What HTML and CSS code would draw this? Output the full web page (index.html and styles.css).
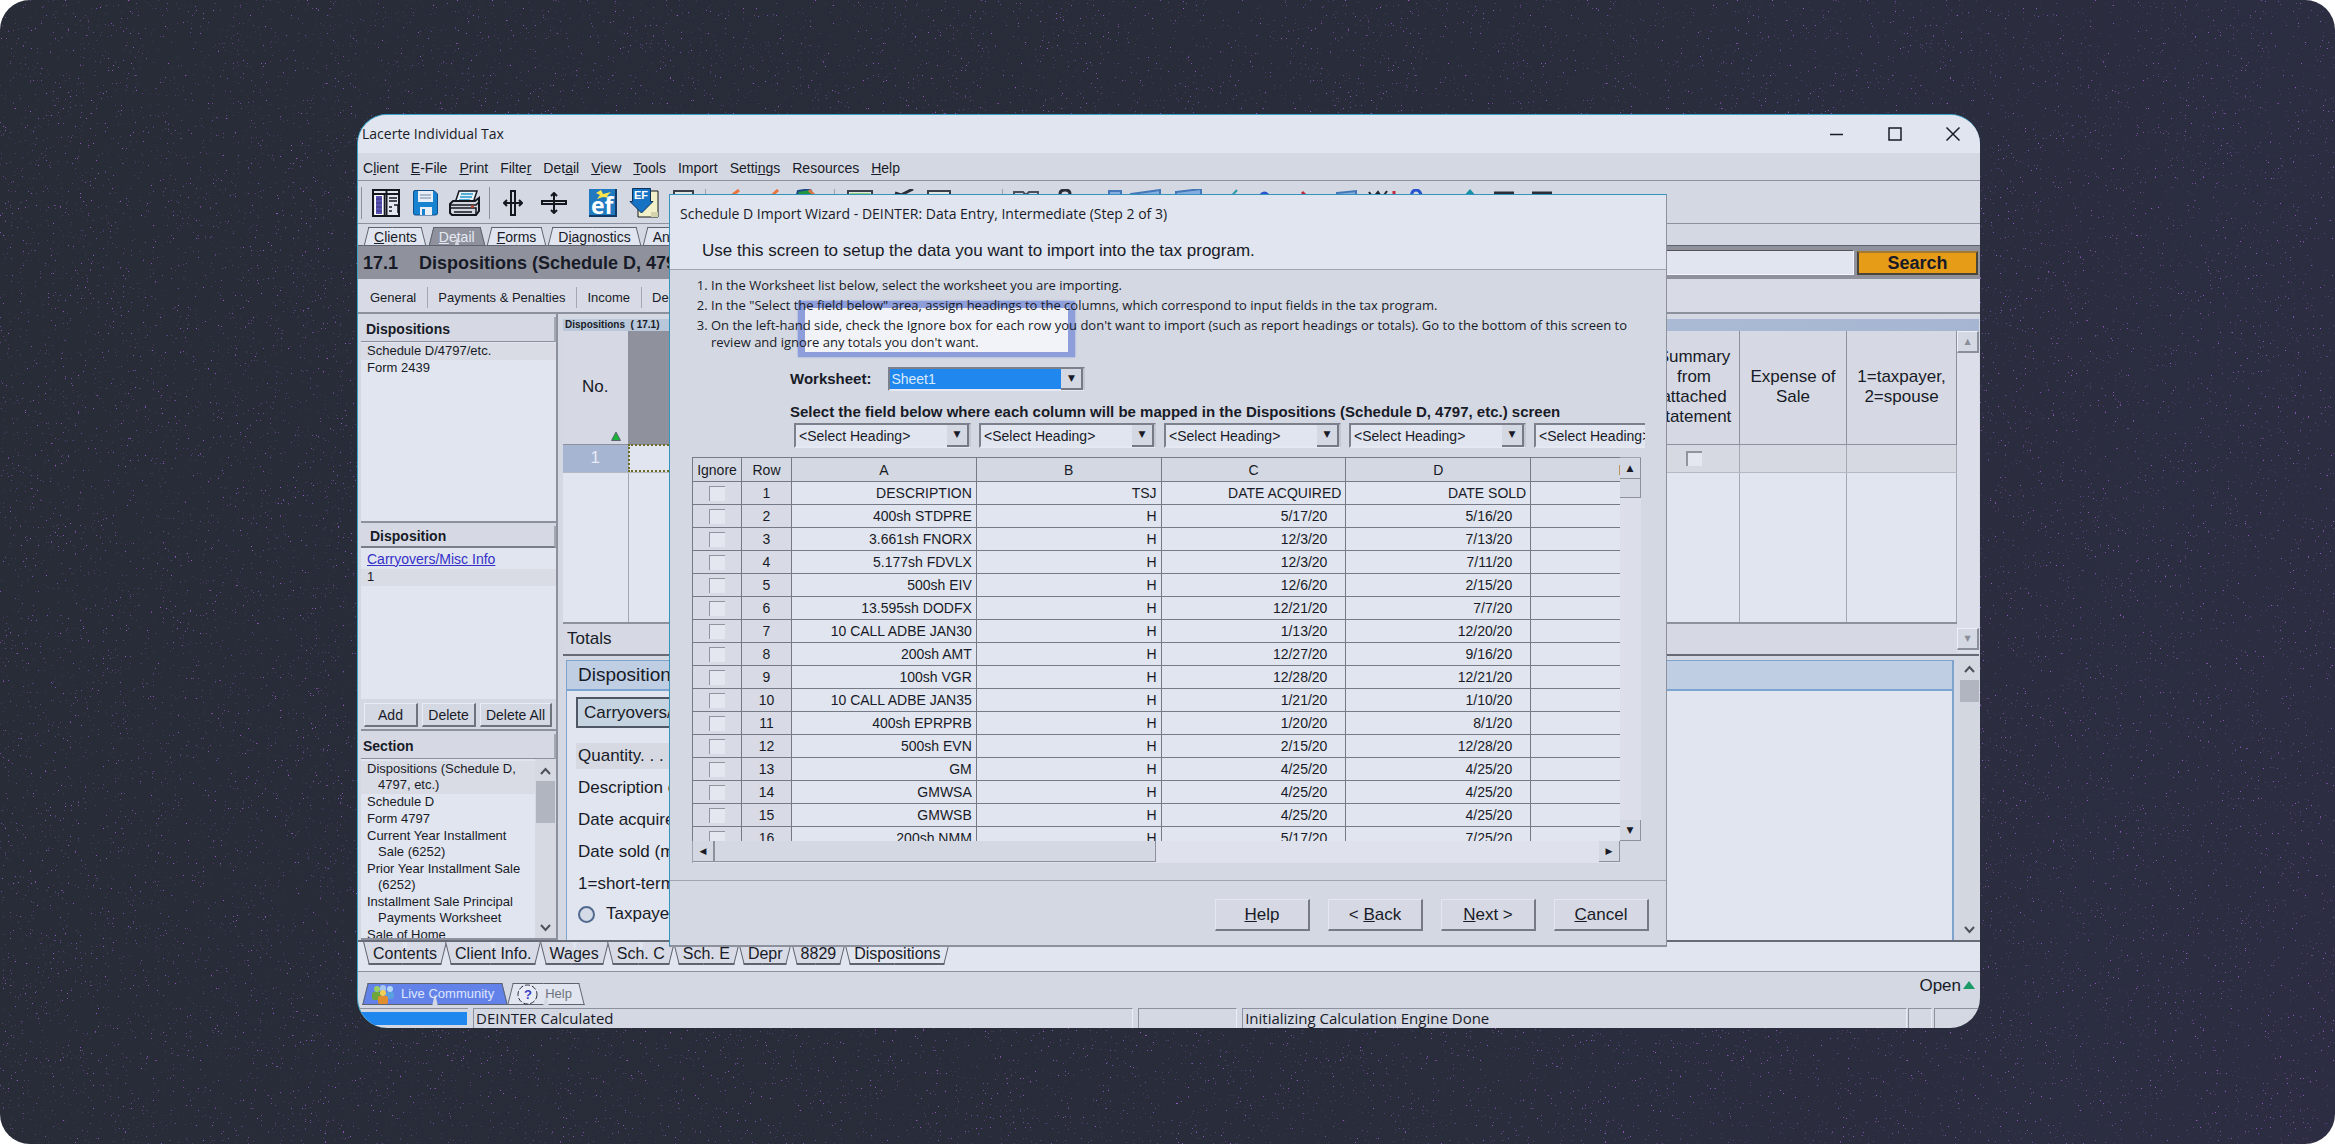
FILE: index.html
```html
<!DOCTYPE html>
<html lang="en">
<head>
<meta charset="utf-8">
<title>Lacerte Individual Tax</title>
<link rel="stylesheet" href="styles.css">
</head>
<body>
<div class="stage">
<svg class="grain" aria-hidden="true"><filter id="grain"><feTurbulence type="fractalNoise" baseFrequency="0.6" numOctaves="2" seed="4"/><feColorMatrix values="0 0 0 0 0.29  0 0 0 0 0.1  0 0 0 0 0.54  9 0 0 0 -6.5"/></filter><rect width="100%" height="100%" filter="url(#grain)"/></svg>
<div class="window">
  <header class="titlebar">
    <span class="app-title">Lacerte Individual Tax</span>
    <div class="controls">
      <button aria-label="Minimize"><svg width="14" height="14" viewBox="0 0 14 14"><path d="M0 7.500h13"/></svg></button>
      <button aria-label="Maximize"><svg width="14" height="14" viewBox="0 0 14 14"><path d="M1 1h12v12H1z"/></svg></button>
      <button aria-label="Close"><svg width="14" height="14" viewBox="0 0 14 14"><path d="M.5.5l13 13M13.500.5l-13 13"/></svg></button>
    </div>
  </header>
  <nav class="menubar">
    <button>C<u>l</u>ient</button><button><u>E</u>-File</button><button><u>P</u>rint</button><button>Filte<u>r</u></button><button>Det<u>a</u>il</button><button><u>V</u>iew</button><button><u>T</u>ools</button><button>Import</button><button>Setti<u>n</u>gs</button><button>Resources</button><button><u>H</u>elp</button>
  </nav>
  <div class="toolbar">
    <button class="t-layout" aria-label="Client list"><svg width="28" height="28" viewBox="0 0 28 28"><path fill="#e4e7f0" stroke="#15171f" stroke-width="2" d="M1 1h26v26H1z"/><path stroke="#15171f" stroke-width="2" d="M1 5h26M14.500 1v26"/><path fill="#5a55b5" stroke="#fff" d="M3.500 6.500h7v19h-7z"/><path stroke="#3a3780" d="M4 10h6M4 14h6M4 18h6M4 22h6"/><path stroke="#15171f" stroke-width="1.500" d="M12.500 5v22M17 9h8M17 12h8M17 18h3M17 22h3M22 16h4v8"/></svg></button>
    <button class="t-save" aria-label="Save"><svg width="25" height="26" viewBox="0 0 25 26"><path fill="#1782d0" stroke="#0c4f8c" d="M.5 2q0-1.500 1.500-1.500h19l3.500 3.500v19q0 2-2 2H2q-1.500 0-1.500-2z"/><path fill="#e9edf5" d="M5 1h15v11H5zM7 17h12v8H7z"/><path fill="#1782d0" d="M9 19h3v6H9z"/><path stroke="#6f87a8" d="M7 5h11M7 8h11"/></svg></button>
    <button class="t-print" aria-label="Print"><svg width="31" height="27" viewBox="0 0 31 27"><path fill="#eaf2f8" stroke="#15171f" stroke-width="1.500" d="M10 1h18l-4 12H6z"/><path stroke="#2397c7" stroke-width="1.500" d="M12 4h12M11 7h12M10 10h11"/><path fill="#d3d6dd" stroke="#15171f" stroke-width="2" d="M1 14l3-3h22l4-3v13l-3 4H3l-2-2z"/><path stroke="#15171f" stroke-width="1.500" d="M1 18h26v7M1 15h26l3-3M5 22h18"/><path stroke="#d04a2a" stroke-width="2" d="M22 16.500h3"/></svg></button>
    <i class="sep"></i>
    <button class="t-vsplit" aria-label="Split vertically"><svg width="20" height="28" viewBox="0 0 20 28"><path stroke="#15171f" stroke-width="2" d="M8 2v24h4V2zM1 14h18M4 11l-3 3 3 3M16 11l3 3-3 3"/></svg></button>
    <button class="t-hsplit" aria-label="Split horizontally"><svg width="26" height="22" viewBox="0 0 26 22"><path stroke="#15171f" stroke-width="2" d="M1 9h24v3H1zM13 1v20M10 4l3-3 3 3M10 18l3 3 3-3"/></svg></button>
    <button class="t-ef" aria-label="E-file"><svg width="28" height="28" viewBox="0 0 28 28"><path fill="#2179bf" d="M0 0h28v28H0z"/><path stroke="#123a66" stroke-width="2" d="M27 0v27H0"/><path fill="#ffe64d" d="M12 1l2 4 8-2-4 4 3 2-7-1-6 2 3-4-4-2z"/><text x="2" y="25" class="ef-big">ef</text></svg></button>
    <button class="t-efdown" aria-label="Receive e-file"><svg width="30" height="30" viewBox="0 0 30 30"><path fill="#f1f0c8" stroke="#15171f" d="M9 3h20v26H9z"/><path fill="#d3d3ac" d="M22 24h7v5h-7z"/><path fill="#1673c4" stroke="#0b315c" d="M3.500.5h18v13H24L12.500 25 1 13.500h2.500z"/><text x="5" y="11" class="ef-small">EF</text></svg></button>
    <svg class="t-rest" width="892" height="28" viewBox="0 0 892 28" aria-hidden="true">
      <path fill="#dfe8e4" stroke="#3b3f48" stroke-width="2" d="M5 2h19v22H5zM179 2h24v22h-24zM259 2h22v22h-22z"/>
      <path fill="#8cd07c" d="M181 4h20v5h-20z"/>
      <path stroke="#e8753c" stroke-width="3" d="M70 1L56 12M109 1L97 12"/>
      <path fill="#239440" stroke="#1b4b86" stroke-width="2" d="M129 2l12-2 5 12h-20z"/><path stroke="#d97843" stroke-width="3" d="M140 1l8 8"/>
      <path stroke="#2b2e39" stroke-width="3" d="M244 0l-12 6-6-2M391 10V5q0-4 5-4t5 4v5M825 4h20M863 4h20"/>
      <path stroke="#4a4f5c" stroke-width="2" d="M345 12V3h9l3 3 3-3h9v9"/>
      <path stroke="#9da2ad" d="M36.500 0v28M165.500 0v28M333.500 0v28"/>
      <path fill="#84aee0" stroke="#4478b8" stroke-width="2" d="M440 2h12v8h-12zM462 5l29-4v12h-29zM507 3l25-3v12h-25zM668 4l19-2v9h-19z"/>
      <path stroke="#2b9ba8" stroke-width="2" d="M568 1l-9 10"/><path stroke="#2855cf" stroke-width="3" d="M592 6q3-4 7 0M742 10q0-9 5-9t6 9"/>
      <path stroke="#c12a3c" stroke-width="3" d="M633 3l4 4M725 2v8"/><path stroke="#22262f" stroke-width="2" d="M700 3l4 6 5-6 4 6 5-7"/><path fill="#1592a6" d="M801 0l7 8h-14z"/>
    </svg>
  </div>
  <nav class="tabs top-tabs">
    <button class="tab"><span><u>C</u>lients</span></button><button class="tab active"><span><u>D</u>etail</span></button><button class="tab"><span><u>F</u>orms</span></button><button class="tab"><span>D<u>i</u>agnostics</span></button><button class="tab"><span>Ana<u>l</u>ysis</span></button>
  </nav>
  <div class="screen-head">
    <h1><span>17.1</span>Dispositions (Schedule D, 4797, etc.)</h1>
    <input type="text" class="search-box" aria-label="Search">
    <button class="search-btn">Search</button>
  </div>
  <nav class="subnav"><button>General</button><button>Payments &amp; Penalties</button><button>Income</button><button>Deductions</button></nav>

  <main class="main">
    <aside class="side">
      <section class="panel">
        <h2>Dispositions</h2>
        <ul><li class="on">Schedule D/4797/etc.</li><li>Form 2439</li></ul>
      </section>
      <section class="panel second">
        <h2>Disposition</h2>
        <ul><li><a href="#">Carryovers/Misc Info</a></li><li class="on">1</li></ul>
        <div class="panel-btns"><button>Add</button><button>Delete</button><button>Delete All</button></div>
      </section>
      <section class="panel third">
        <h2>Section</h2>
        <div class="scroll-area">
          <ul class="tree"><li class="on">Dispositions (Schedule D, 4797, etc.)</li><li>Schedule D</li><li>Form 4797</li><li>Current Year Installment Sale (6252)</li><li>Prior Year Installment Sale (6252)</li><li>Installment Sale Principal Payments Worksheet</li><li>Sale of Home</li></ul>
          <div class="bar"><svg width="11" height="8" viewBox="0 0 11 8"><path d="M1 7l4.500-5L10 7"/></svg><i></i><svg width="11" height="8" viewBox="0 0 11 8"><path d="M1 1l4.500 5L10 1"/></svg></div>
        </div>
      </section>
    </aside>
    <div class="content">
      <section class="grid-panel">
        <h3>Dispositions &nbsp;( 17.1)</h3>
        <div class="grid-wrap">
          <table class="grid">
            <thead><tr><th class="no">No.<svg width="12" height="10" viewBox="0 0 12 10"><path fill="#19b33a" stroke="#5b6470" d="M6 1l4.500 8.500h-9z"/></svg></th><th class="gray"></th><th class="sum">Summary from attached statement</th><th class="exp">Expense of Sale</th><th class="tax">1=taxpayer, 2=spouse</th></tr></thead>
            <tbody><tr class="first"><td class="num">1</td><td class="cursor"></td><td><input type="checkbox" aria-label="Summary from attached statement"></td><td></td><td></td></tr><tr class="blank"><td></td><td></td><td></td><td></td><td></td></tr></tbody>
            <tfoot><tr><td colspan="5">Totals</td></tr></tfoot>
          </table>
          <div class="old-bar"><button aria-label="Scroll up">▲</button><button aria-label="Scroll down">▼</button></div>
        </div>
      </section>
      <section class="form-panel">
        <div class="form">
          <h2>Disposition Information</h2>
          <button class="carry">Carryovers/Misc Info</button>
          <p class="row on">Quantity. . . . . . . . .</p><p class="row">Description of property</p><p class="row">Date acquired (m/d/y)</p><p class="row">Date sold (m/d/y)</p><p class="row">1=short-term, 2=long-term</p>
          <label class="row radio"><input type="radio" name="owner">Taxpayer</label>
        </div>
        <div class="bar"><svg width="11" height="8" viewBox="0 0 11 8"><path d="M1 7l4.500-5L10 7"/></svg><i></i><svg width="11" height="8" viewBox="0 0 11 8"><path d="M1 1l4.500 5L10 1"/></svg></div>
      </section>
    </div>
  </main>

  <nav class="tabs sheet-tabs">
    <button class="tab"><span>Contents</span></button><button class="tab"><span>Client Info.</span></button><button class="tab"><span>Wages</span></button><button class="tab"><span>Sch. C</span></button><button class="tab"><span>Sch. E</span></button><button class="tab"><span>Depr</span></button><button class="tab"><span>8829</span></button><button class="tab current"><span>Dispositions</span></button>
  </nav>
  <div class="community">
    <div class="tabs live-tabs">
      <button class="tab live"><span><svg width="22" height="20" viewBox="0 0 22 20"><rect x="8" y="1" width="6" height="7" rx="3" fill="#a9c7ef"/><rect x="15" y="2" width="6" height="6" rx="3" fill="#b7d8f5"/><rect x="14" y="8" width="8" height="7" rx="2" fill="#5aa0e0"/><rect x="2" y="2" width="6" height="6" rx="3" fill="#9bcf63"/><rect x="0" y="8" width="9" height="8" rx="2" fill="#6fa63c"/><rect x="8" y="6" width="6" height="6" rx="3" fill="#f3cf55"/><rect x="6" y="12" width="10" height="8" rx="2" fill="#e08f2c"/></svg>Live Community</span></button><button class="tab help"><span><svg width="21" height="21" viewBox="0 0 21 21"><circle cx="10.500" cy="10.500" r="9.500" fill="#e9ecf6" stroke="#272b38" stroke-dasharray="5 2"/><text x="7" y="15" class="qmark">?</text></svg>Help</span></button>
    </div>
    <button class="open">Open<svg width="12" height="9" viewBox="0 0 12 9"><path fill="#1c9a68" d="M6 0l6 8H0z"/></svg></button>
  </div>
  <footer class="status"><div class="progress"><i></i></div><div class="c1">DEINTER Calculated</div><div class="c2"></div><div class="c3">Initializing Calculation Engine Done</div><div class="c4"></div><div class="c5"></div></footer>

  <div class="dialog" role="dialog" aria-labelledby="dlg-title">
    <div class="dlg-head"><h2 id="dlg-title">Schedule D Import Wizard - DEINTER: Data Entry, Intermediate (Step 2 of 3)</h2><p>Use this screen to setup the data you want to import into the tax program.</p></div>
    <div class="dlg-body">
      <div class="callout"></div>
      <ol><li>In the Worksheet list below, select the worksheet you are importing.</li><li>In the "Select the field below" area, assign headings to the columns, which correspond to input fields in the tax program.</li><li>On the left-hand side, check the Ignore box for each row you don't want to import (such as report headings or totals). Go to the bottom of this screen to<br>review and ignore any totals you don't want.</li></ol>
      <div class="sheet-row"><label for="ws">Worksheet:</label><span class="combo ws"><select id="ws"><option>Sheet1</option></select></span></div>
      <h3>Select the field below where each column will be mapped in the Dispositions (Schedule D, 4797, etc.) screen</h3>
      <div class="headings">
        <span class="combo"><select aria-label="Column A"><option>&lt;Select Heading&gt;</option></select></span><span class="combo"><select aria-label="Column B"><option>&lt;Select Heading&gt;</option></select></span><span class="combo"><select aria-label="Column C"><option>&lt;Select Heading&gt;</option></select></span><span class="combo"><select aria-label="Column D"><option>&lt;Select Heading&gt;</option></select></span><span class="combo"><select aria-label="Column E"><option>&lt;Select Heading&gt;</option></select></span>
      </div>
      <div class="sheet">
        <div class="sheet-view">
          <table>
            <thead><tr><th class="ig">Ignore</th><th class="rw">Row</th><th>A</th><th>B</th><th>C</th><th>D</th><th>E</th></tr></thead>
            <tbody>
            <tr class="names"><td><input type="checkbox" aria-label="Ignore row 1"></td><td>1</td><td>DESCRIPTION</td><td>TSJ</td><td>DATE ACQUIRED</td><td>DATE SOLD</td><td></td></tr>
            <tr><td><input type="checkbox" aria-label="Ignore row 2"></td><td>2</td><td>400sh STDPRE</td><td>H</td><td>5/17/20</td><td>5/16/20</td><td></td></tr>
            <tr><td><input type="checkbox" aria-label="Ignore row 3"></td><td>3</td><td>3.661sh FNORX</td><td>H</td><td>12/3/20</td><td>7/13/20</td><td></td></tr>
            <tr><td><input type="checkbox" aria-label="Ignore row 4"></td><td>4</td><td>5.177sh FDVLX</td><td>H</td><td>12/3/20</td><td>7/11/20</td><td></td></tr>
            <tr><td><input type="checkbox" aria-label="Ignore row 5"></td><td>5</td><td>500sh EIV</td><td>H</td><td>12/6/20</td><td>2/15/20</td><td></td></tr>
            <tr><td><input type="checkbox" aria-label="Ignore row 6"></td><td>6</td><td>13.595sh DODFX</td><td>H</td><td>12/21/20</td><td>7/7/20</td><td></td></tr>
            <tr><td><input type="checkbox" aria-label="Ignore row 7"></td><td>7</td><td>10 CALL ADBE JAN30</td><td>H</td><td>1/13/20</td><td>12/20/20</td><td></td></tr>
            <tr><td><input type="checkbox" aria-label="Ignore row 8"></td><td>8</td><td>200sh AMT</td><td>H</td><td>12/27/20</td><td>9/16/20</td><td></td></tr>
            <tr><td><input type="checkbox" aria-label="Ignore row 9"></td><td>9</td><td>100sh VGR</td><td>H</td><td>12/28/20</td><td>12/21/20</td><td></td></tr>
            <tr><td><input type="checkbox" aria-label="Ignore row 10"></td><td>10</td><td>10 CALL ADBE JAN35</td><td>H</td><td>1/21/20</td><td>1/10/20</td><td></td></tr>
            <tr><td><input type="checkbox" aria-label="Ignore row 11"></td><td>11</td><td>400sh EPRPRB</td><td>H</td><td>1/20/20</td><td>8/1/20</td><td></td></tr>
            <tr><td><input type="checkbox" aria-label="Ignore row 12"></td><td>12</td><td>500sh EVN</td><td>H</td><td>2/15/20</td><td>12/28/20</td><td></td></tr>
            <tr><td><input type="checkbox" aria-label="Ignore row 13"></td><td>13</td><td>GM</td><td>H</td><td>4/25/20</td><td>4/25/20</td><td></td></tr>
            <tr><td><input type="checkbox" aria-label="Ignore row 14"></td><td>14</td><td>GMWSA</td><td>H</td><td>4/25/20</td><td>4/25/20</td><td></td></tr>
            <tr><td><input type="checkbox" aria-label="Ignore row 15"></td><td>15</td><td>GMWSB</td><td>H</td><td>4/25/20</td><td>4/25/20</td><td></td></tr>
            <tr><td><input type="checkbox" aria-label="Ignore row 16"></td><td>16</td><td>200sh NMM</td><td>H</td><td>5/17/20</td><td>7/25/20</td><td></td></tr>
            </tbody>
          </table>
        </div>
        <div class="vbar"><button aria-label="Scroll up">▲</button><i></i><button aria-label="Scroll down">▼</button></div>
        <div class="hbar"><button aria-label="Scroll left">◀</button><i></i><button aria-label="Scroll right">▶</button></div>
        <div class="corner"></div>
      </div>
    </div>
    <div class="dlg-foot"><button><u>H</u>elp</button><button>&lt; <u>B</u>ack</button><button><u>N</u>ext &gt;</button><button><u>C</u>ancel</button></div>
  </div>
</div>
</div>
</body>
</html>
```
FILE: styles.css
```css
:root {
  --face: #d4d8e2;
  --paper: #e1e5ef;
  --ink: #181b27;
  --line: #8c919d;
  --dark: #666b77;
  --ui: "Liberation Sans", Arial, sans-serif;
  --title: "Open Sans", "Noto Sans", sans-serif;
}
* { box-sizing: border-box; }
body { margin: 0; background: #fff; font: 13px/16px var(--ui); color: var(--ink); }
h1, h2, h3, p, ul, ol { margin: 0; padding: 0; font-weight: normal; }
ul { list-style: none; }
button { font: inherit; color: inherit; border: 0; padding: 0; background: none; white-space: nowrap; }
svg { display: block; fill: none; }
table { border-collapse: collapse; table-layout: fixed; }
th { font-weight: normal; }
i { display: block; }

.stage { position: relative; display: flex; min-height: 100vh; padding: 114px 355px 116px 357px; border-radius: 30px; background: linear-gradient(100deg, #282c37 0%, #292d3b 60%, #2c2d42 100%); overflow: hidden; }
.grain { position: absolute; inset: 0; width: 100%; height: 100%; }
.window { position: relative; flex: 1; min-width: 0; display: flex; flex-direction: column; border: 1px solid #36a5cc; border-width: 1px 0 0 1px; border-radius: 30px; background: var(--face); overflow: hidden; }

.titlebar { display: flex; justify-content: space-between; align-items: center; height: 38px; padding: 0 20px 0 4px; background: var(--paper); }
.app-title { font: 14px/20px var(--title); }
.controls { display: flex; gap: 44px; }
.controls svg { stroke: var(--ink); stroke-width: 1.5; }
.menubar { display: flex; align-items: center; gap: 12px; height: 28px; padding: 2px 0 0 5px; border-bottom: 1px solid var(--line); font-size: 14px; }

.toolbar { display: flex; align-items: center; height: 43px; padding: 2px 0 0 3px; border-bottom: 1px solid var(--line); }
.toolbar svg { flex: none; }
.t-layout { padding: 0 13px 0 10px; border-left: 1px solid var(--line); height: 32px; }
.t-save { padding-right: 11px; }
.t-print { padding-right: 9px; }
.sep { width: 1px; height: 32px; margin-right: 13px; background: var(--line); }
.t-vsplit { padding-right: 18px; }
.t-hsplit { padding-right: 22px; }
.t-ef { padding-right: 12px; }
.t-efdown { padding-right: 10px; }
.ef-big { font: bold 23px var(--title); fill: #fff; }
.ef-small { font: bold 11px var(--ui); fill: #fff; }

.tabs { display: flex; }
.tab { position: relative; padding: 0 14px; z-index: 0; }
.tab::before, .tab::after { content: ""; position: absolute; z-index: -1; top: 0; bottom: 0; background: var(--tab, var(--paper)); border: 1px solid #5e636f; }
.tab::before { left: 3px; right: 50%; border-right: 0; transform: skewX(-14deg); }
.tab::after { left: 50%; right: 3px; border-left: 0; transform: skewX(14deg); }
.tab span { position: relative; z-index: 1; }
.top-tabs { height: 22px; padding: 3px 0 0 5px; font-size: 14px; border-bottom: 1px solid #5e636f; }
.top-tabs .tab { height: 19px; padding: 0 11px; }
.top-tabs .active { --tab: #8f929d; color: #e6e9f3; }
.screen-head { display: flex; align-items: center; height: 33px; padding: 0 2px 0 5px; background: #8f929d; gap: 3px; }
.screen-head h1 { flex: 1; font: bold 18px/24px var(--ui); }
.screen-head h1 span { display: inline-block; width: 56px; }
.search-box { width: 240px; height: 25px; border: 1px solid #555; border-right-color: #f3f5fa; border-bottom-color: #f3f5fa; background: var(--paper); }
.search-btn { width: 121px; height: 24px; background: #e79c18; border: 2px solid #4a4538; border-top-color: #a57a30; font: bold 18px/18px var(--ui); }
.subnav { display: flex; align-items: center; height: 35px; padding: 4px 0 0 2px; border-bottom: 2px solid var(--line); background: #d8dbe5; }
.subnav button { height: 21px; padding: 0 11px 0 10px; border-left: 1px solid #a4a8b3; }
.subnav button:first-child { border-left: 0; }

.main { flex: 1; min-height: 0; display: flex; border-bottom: 2px solid var(--dark); }
.side { display: flex; flex-direction: column; gap: 3px; width: 200px; padding: 3px 0 0 3px; border-right: 2px solid var(--line); }
.panel { flex: 1; min-height: 0; display: flex; flex-direction: column; background: var(--paper); border-bottom: 2px solid var(--line); overflow: hidden; }
.panel h2 { height: 25px; padding-left: 5px; background: #d6d9e3; border-bottom: 1px solid var(--line); border-right: 2px solid #a4a8b3; font: bold 14px/24px var(--ui); }
.panel ul { flex: 1; padding-top: 1px; }
.panel li { padding: 0 6px 1px; }
.panel .on { background: #d9dce5; }
.second h2 { height: 22px; padding-left: 9px; line-height: 21px; border-bottom-width: 2px; border-bottom-color: #777c88; }
.second ul { padding-top: 3px; }
.second a { color: #3430c8; font-size: 14px; }
.panel-btns { display: flex; gap: 4px; padding: 4px 4px 2px 3px; background: var(--face); font-size: 14px; }
.panel-btns button { height: 24px; flex: 0 0 54px; border: 1px solid #e9ecf4; border-right: 2px solid #6e737e; border-bottom: 2px solid #6e737e; }
.panel-btns button:last-child { flex: 1; }
.third h2 { padding-left: 2px; }
.third ul { padding-top: 2px; }
.scroll-area { flex: 1; min-height: 0; display: flex; }
.tree li { padding-left: 17px; text-indent: -11px; }
.bar { display: flex; flex-direction: column; align-items: center; width: 21px; padding: 8px 0 6px; background: #d6d9e2; }
.bar svg { stroke: #4c515d; stroke-width: 2; }
.bar i { width: 19px; height: 42px; margin: 6px 0 auto; background: #b0b5bf; }

.content { flex: 1; min-width: 0; display: flex; flex-direction: column; padding: 5px 1px 0 5px; }
.grid-panel { height: 337px; border-bottom: 2px solid var(--dark); }
.grid-panel h3 { height: 12px; padding-left: 2px; background: linear-gradient(90deg, #b9c8da, #a6b6d2); font-size: 10px; line-height: 11px; font-weight: bold; }
.grid-wrap { display: flex; }
.grid { flex: 1; font-size: 17px; line-height: 20px; background: var(--paper); }
.grid th { height: 113px; border-right: 1px solid var(--line); border-bottom: 1px solid var(--line); background: #d6d9e3; padding: 0 6px; }
.grid .no { width: 65px; position: relative; }
.no svg { position: absolute; right: 6px; bottom: 3px; }
.grid .gray { background: #8f929d; }
.grid .sum { width: 91px; }
.grid .exp { width: 107px; }
.grid .tax { width: 110px; }
.grid td { border-right: 1px solid #a4a8b3; padding: 0; text-align: center; }
.grid .first td { height: 28px; background: #d6d9e2; border-bottom: 1px solid #b4b8c3; }
.grid .first .num { background: #a6b6d2; color: #e6ebf6; }
.grid .first .cursor { background: var(--paper); outline: 2px dotted #6d6c20; outline-offset: -2px; }
.grid .blank td { height: 151px; border-bottom: 2px solid var(--line); }
.grid tfoot td { height: 30px; padding-left: 4px; text-align: left; background: #d6d9e3; border: 0; }
.old-bar { display: flex; flex-direction: column; justify-content: space-between; width: 22px; padding-bottom: 3px; background: #dcdfe9; }
.old-bar button { height: 22px; border: 1px solid #eef0f6; border-right: 2px solid #8a8f9b; border-bottom: 2px solid #8a8f9b; background: var(--face); font: 8px/18px "DejaVu Sans", sans-serif; color: #8a8f9b; }
.form-panel { flex: 1; min-height: 0; display: flex; gap: 5px; padding: 4px 0 0 3px; }
.form { flex: 1; border: 1px solid #7fa3cf; border-width: 1px 2px 0 1px; background: var(--paper); font-size: 17px; line-height: 22px; overflow: hidden; }
.form h2 { height: 30px; padding-left: 11px; background: #c0cee4; border-bottom: 2px solid #7ca5cf; font: 19px/28px var(--ui); }
.carry { display: block; height: 31px; margin: 6px 0 15px 9px; padding: 0 6px; border: 2px solid #4f5765; background: #c6d3e0; }
.row { display: flex; align-items: center; height: 26px; margin: 0 9px 6px; padding-left: 2px; }
.row.on { width: 40%; background: #d6d9e2; }
.radio { margin-top: -2px; }
.radio input { appearance: none; width: 17px; height: 17px; margin: 0 11px 0 0; border: 2px solid #52698f; border-radius: 50%; background: #d4dae6; }
.form-panel .bar { width: 20px; padding-top: 5px; background: #d3d7df; }
.form-panel .bar i { height: 22px; margin-top: 7px; }

.sheet-tabs { height: 30px; padding: 0 0 6px 6px; font-size: 16px; background: var(--paper); border-bottom: 1px solid var(--line); }
.sheet-tabs .tab { padding: 0 9px; --tab: #d8dbe5; }
.sheet-tabs .current { --tab: var(--paper); }
.sheet-tabs .tab::before { left: 2px; transform: skewX(14deg); border-top: 0; border-bottom-width: 2px; }
.sheet-tabs .tab::after { right: 2px; transform: skewX(-14deg); border-top: 0; border-bottom-width: 2px; }
.community { display: flex; justify-content: space-between; height: 36px; padding: 0 5px 0 4px; }
.live-tabs { padding-top: 11px; align-items: flex-start; }
.live-tabs .tab { height: 22px; padding: 0 13px 0 10px; }
.live-tabs .tab span { display: flex; align-items: center; gap: 7px; }
.live { --tab: #6282ea; color: #dfe6fb; }
.help { color: #6e727e; }
.qmark { font: bold 13px var(--ui); fill: #3b3fc0; }
.open { display: flex; align-items: center; gap: 2px; height: 27px; font-size: 17px; }
.status { display: flex; height: 20px; gap: 5px; font: 15px/18px var(--title); }
.status div { border: 1px solid var(--line); border-right-color: #e9ecf4; border-bottom: 0; padding-left: 2px; }
.status .progress { width: 110px; padding: 3px 1px 3px 3px; border-width: 1px 0 0; }
.progress i { height: 13px; background: #1f87ee; }
.c1 { flex: 661; }
.c2 { flex: 96; }
.c3 { flex: 666; }
.status .c4 { width: 24px; margin-left: -4px; }
.status .c5 { width: 46px; margin-left: -3px; }

.dialog { position: absolute; left: 311px; right: 313px; top: 79px; z-index: 5; background: var(--face); border: 1px solid #3494bb; border-right-color: #8c919d; border-bottom: 2px solid #8c919d; }
.dlg-head { padding: 8px 0 6px 10px; background: var(--paper); border-bottom: 1px solid #a0a4b0; }
.dlg-head h2 { font: 14px/22px var(--title); }
.dlg-head p { padding: 14px 0 0 22px; font-size: 17px; line-height: 24px; }
.dlg-body { position: relative; height: 611px; padding: 7px 25px 0 22px; border-bottom: 1px solid #a0a4b0; }
.callout { position: absolute; left: 128px; top: 31px; width: 277px; height: 56px; border: 7px solid #8d9edb; border-bottom-width: 5px; background: #f2f3f8; box-shadow: 0 0 2px #8d9edb; }
.dlg-body ol { position: relative; padding-left: 19px; font: 13px/17px var(--title); white-space: nowrap; }
.dlg-body li { padding-bottom: 3px; }
.sheet-row { display: flex; align-items: center; gap: 17px; padding: 13px 0 0 98px; font-weight: bold; font-size: 15px; }
.dlg-body h3 { padding: 13px 0 3px 98px; font: bold 15px/16px var(--ui); white-space: nowrap; }
.combo { position: relative; flex: none; width: 177px; height: 25px; }
.combo select { appearance: none; width: 100%; height: 100%; padding: 0 3px; border: 2px solid #7b808c; border-right-color: #c3c7d1; border-bottom-color: #e6e9f1; border-radius: 0; background: var(--paper); font: 14px/18px var(--ui); color: var(--ink); }
.combo::after { content: "▼"; position: absolute; right: 2px; top: 2px; bottom: 1px; width: 20px; background: var(--face); border-right: 2px solid #757a86; border-bottom: 2px solid #757a86; font: 9px/19px "DejaVu Sans", sans-serif; text-align: center; pointer-events: none; }
.combo.ws { width: 197px; height: 24px; }
.combo.ws select { padding: 0 1px; background: linear-gradient(90deg, #1f87ee 172px, var(--face) 172px); color: #dceafd; }
.headings { display: flex; gap: 8px; margin: 0 -4px 9px 102px; overflow: hidden; }
.sheet { display: grid; grid-template-columns: minmax(0, 1fr) 21px; grid-template-rows: 384px 22px; }
.sheet-view { overflow: hidden; }
.sheet table { width: 1024px; font-size: 14px; line-height: 18px; background: var(--paper); }
.sheet th { height: 24px; padding: 0; background: var(--face); border: 1px solid #757a86; }
.sheet td { height: 23px; padding: 0 4px; border: 1px solid #757a86; text-align: right; }
.sheet .ig { width: 49px; }
.sheet .rw { width: 50px; }
.sheet td:nth-child(-n+2) { background: #d8dbe5; text-align: center; }
.sheet tr:not(.names) td:nth-child(n+5) { padding-right: 18px; }
input[type=checkbox] { appearance: none; display: block; width: 16px; height: 15px; margin: 0 auto; background: #e4e7f0; border: 1px solid #8f949f; border-width: 2px 0 0 2px; }
.sheet input { border-width: 1px 0 0 1px; }
.vbar { display: flex; flex-direction: column; border-top: 1px solid #a0a4b0; background: #dcdfe9; }
.vbar button, .hbar button { width: 21px; height: 21px; border-right: 1px solid var(--line); border-bottom: 1px solid var(--line); background: var(--face); font: 9px/20px "DejaVu Sans", sans-serif; }
.vbar i { height: 19px; margin-bottom: auto; background: var(--face); border-right: 1px solid var(--line); border-bottom: 1px solid var(--line); }
.hbar { display: flex; background: #dfe2ec; border-left: 1px solid #a0a4b0; }
.hbar i { width: 442px; margin-right: auto; height: 21px; border: 1px solid var(--line); border-top: 0; background: var(--face); }
.corner { background: var(--face); }
.dlg-foot { display: flex; justify-content: flex-end; gap: 18px; padding: 18px 17px 14px; }
.dlg-foot button { width: 95px; height: 32px; border: 1px solid #e4e7f0; border-right: 2px solid #757a86; border-bottom: 2px solid #757a86; font-size: 17px; background: #d6d9e3; }
```
